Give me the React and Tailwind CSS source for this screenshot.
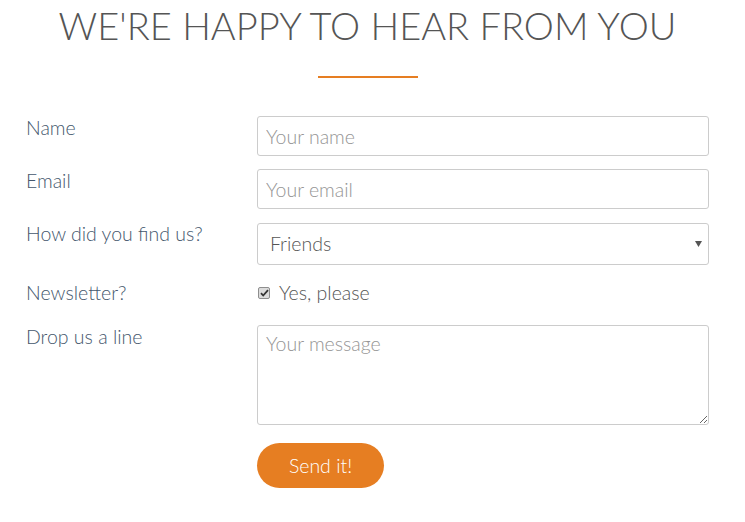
import { useState } from "react";

const labelClass = "w-[231px] shrink-0 text-[19.5px] leading-6 text-[#45576d]";
const fieldClass =
  "w-[452px] h-10 rounded-[3px] border border-[#cccccc] bg-white px-2 text-[19.5px] text-[#555] placeholder:text-[#959595] outline-none";

const App = () => {
  const [form, setForm] = useState({
    name: "",
    email: "",
    source: "Friends",
    newsletter: true,
    message: "",
  });

  const handleChange = (event) => {
    const { name, value } = event.target;
    setForm({ ...form, [name]: value });
  };

  return (
    <div className="min-h-screen w-full bg-white font-['Lato','Open_Sans',sans-serif] font-light">
      <div className="pr-[10px]">
        <h1 className="pt-px text-center text-[38px] leading-[48px] font-light text-[#555]">
          WE'RE HAPPY TO HEAR FROM YOU
        </h1>
        <div className="mx-auto mt-[27px] h-[2px] w-[100px] bg-[#e67e22]" />
      </div>

      <form className="mt-[38px] flex flex-col pl-[26px]" onSubmit={(e) => e.preventDefault()}>
        <div className="flex items-start">
          <label className={labelClass}>Name</label>
          <input
            type="text"
            name="name"
            placeholder="Your name"
            value={form.name}
            onChange={handleChange}
            className={fieldClass}
          />
        </div>

        <div className="mt-[13px] flex items-start">
          <label className={labelClass}>Email</label>
          <input
            type="text"
            name="email"
            placeholder="Your email"
            value={form.email}
            onChange={handleChange}
            className={fieldClass}
          />
        </div>

        <div className="mt-[14px] flex items-start">
          <label className={`${labelClass} -mt-px`}>How did you find us?</label>
          <div className="relative w-[452px]">
            <select
              name="source"
              value={form.source}
              onChange={handleChange}
              className="h-[42px] w-full appearance-none rounded-[3px] border border-[#cccccc] bg-white pl-3 pr-8 text-[19.5px] text-[#555] outline-none"
            >
              <option>Friends</option>
              <option>Search engine</option>
              <option>Advertisement</option>
            </select>
            <svg
              className="pointer-events-none absolute right-[7px] top-[18px]"
              width="7"
              height="6"
              viewBox="0 0 7 6"
            >
              <path d="M0 0h7L3.5 6z" fill="#555" />
            </svg>
          </div>
        </div>

        <div className="mt-[16px] flex items-start">
          <label className={labelClass}>Newsletter?</label>
          <label className="flex h-6 items-center text-[19.5px] text-[#555]">
            <span className="ml-px flex h-[12px] w-[12px] items-center justify-center rounded-[2px] border border-[#8e8e8e] bg-[#dcdcdc]">
              <svg width="9" height="8" viewBox="0 0 9 8">
                <path d="M1 4.2l2.2 2.3L8 1.2" fill="none" stroke="#333" strokeWidth="1.8" />
              </svg>
            </span>
            <span className="ml-[9px]">Yes, please</span>
          </label>
        </div>

        <div className="mt-[20px] flex items-start">
          <label className={labelClass}>Drop us a line</label>
          <textarea
            name="message"
            placeholder="Your message"
            value={form.message}
            onChange={handleChange}
            className="h-[100px] w-[452px] rounded-[3px] border border-[#cccccc] bg-white px-2 py-[6px] text-[19.5px] leading-6 text-[#555] placeholder:text-[#959595] outline-none"
          />
        </div>

        <div className="mt-[18px] flex">
          <div className="w-[231px] shrink-0" />
          <button
            type="submit"
            className="h-[45px] w-[127px] rounded-full bg-[#e67e22] text-[19.5px] font-light text-white"
          >
            Send it!
          </button>
        </div>
      </form>
    </div>
  );
};

export default App;
